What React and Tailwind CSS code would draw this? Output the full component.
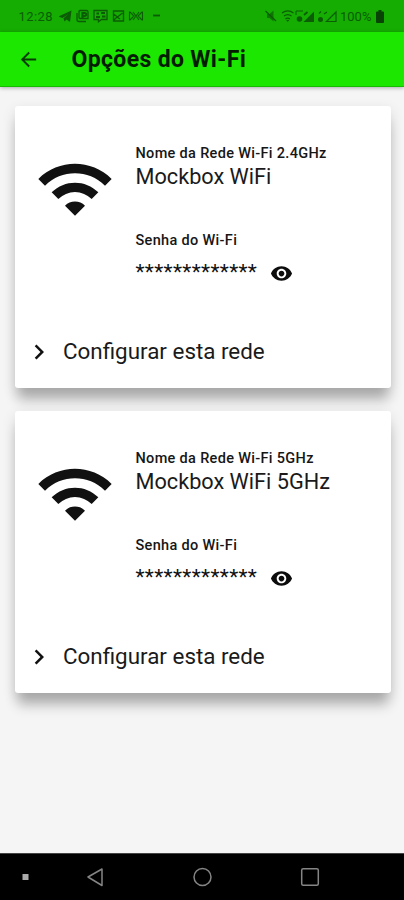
import React from "react";
import { MdArrowBack, MdVisibility, MdWifi, MdKeyboardArrowRight } from "react-icons/md";

const networks = [
  { label: "Nome da Rede Wi-Fi 2.4GHz", name: "Mockbox WiFi", password: "*************" },
  { label: "Nome da Rede Wi-Fi 5GHz", name: "Mockbox WiFi 5GHz", password: "*************" },
];

const NotificationIcons = () => (
  <svg width="106" height="14" viewBox="0 0 106 14" fill="none" stroke="currentColor" strokeWidth="1.3" className="ml-[3px]">
    <path d="M-0.5 7.5 12.5 1.5 11 13 7.5 10.500 5.500 12.5 4.500 9.300 9.500 5 3.500 9Z" fill="currentColor" stroke="none" />
    <path d="M21 1.5h6.5a1.5 1.5 0 0 1 1.5 1.5v6.5h-8a1 1 0 0 1-1-1V2.5a1 1 0 0 1 1-1ZM18 4v6.5a2 2 0 0 0 2 2h7" />
    <path d="M23.5 9V4h2.2a1.5 1.5 0 0 1 0 3h-2" strokeWidth="2.2" />
    <path d="M35 1.5h13v9h-5.5l-3 2.2v-2.2H35Z" />
    <path d="M37.5 4.5h2.5M42 4h4M37 8h4M43 7.5h3.5" strokeWidth="1.9" />
    <path d="M54.5 2h10v10h-10ZM54.5 5l4 3 5-4M55 11l3-3 3 2" />
    <path d="M70.5 2.5v9M83.5 2.5v9M71 3l4 4-4 4M83 3l-4 4 4 4M74 3l6 8M80 3l-6 8" strokeWidth="1.1" />
    <path d="M94 6.5h7" strokeWidth="1.8" />
  </svg>
);

const SignalIcons = () => (
  <svg width="76" height="16" viewBox="0 0 76 16" fill="none" stroke="currentColor" strokeWidth="1.2">
    <path d="M3 6h2.500l4-3.500v11L5.500 10H3Z" fill="currentColor" stroke="none" opacity="0.7" />
    <path d="M1.500 3l10.500 10" />
    <path d="M18 5c3.5-2.6 8-2.6 11.5 0M20 8c2.3-1.7 5.3-1.7 7.5 0M21.500 11c1.3-1 3-1 4.500 0" />
    <path d="M22.2 12h3l-1.500 2Z" fill="currentColor" stroke="none" />
    <path d="M32 3h7M32 3v4" strokeWidth="1" />
    <circle cx="35.5" cy="11" r="2.8" fill="currentColor" stroke="none" />
    <path d="M39.500 14 50 3.500V14Z" fill="currentColor" stroke="none" />
    <path d="M40 7l3.500-3" strokeWidth="1.8" />
    <circle cx="56.500" cy="11.5" r="2.5" fill="currentColor" stroke="none" />
    <path d="M55 5.500l2-2M60 6l3-2M62.5 13.500h9.500v-9.500Z" />
  </svg>
);

const StatusBar = () => (
  <div className="h-8 shrink-0 bg-[#15ad02] text-[#0b5c04] flex items-center pl-[18.5px] pr-5">
    <span className="text-[13px] tracking-[0.4px] pt-0.5 w-[37px]">12:28</span>
    <NotificationIcons />
    <div className="ml-auto flex items-center">
      <SignalIcons />
      <span className="text-[13px] w-[33px] pt-0.5">100%</span>
      <svg width="8" height="13" viewBox="0 0 8 13" fill="currentColor" className="ml-[3px] text-[#084204]">
        <path d="M2.5 0h3v1.5H7a1 1 0 0 1 1 1V12a1 1 0 0 1-1 1H1a1 1 0 0 1-1-1V2.5a1 1 0 0 1 1-1h1.5Z" />
      </svg>
    </div>
  </div>
);

const NetworkCard = ({ network }) => (
  <div className="h-[282px] rounded-[3px] bg-white shadow-[0_15px_12px_-3px_rgba(0,0,0,0.24),0_5px_14px_rgba(0,0,0,0.13)] flex flex-col">
    <div className="flex pt-[39px]">
      <MdWifi className="w-[80px] h-[80px] ml-5 mt-[4px] text-[#111] shrink-0" />
      <div className="ml-[21px] whitespace-nowrap">
        <p className="text-[14.5px] leading-[18px] tracking-[0.32px] font-medium text-[#161616]">{network.label}</p>
        <p className="text-[21.7px] leading-[28px] text-[#1a1a1a]">{network.name}</p>
        <p className="mt-[41px] text-[14.5px] leading-[18px] tracking-[0.32px] font-medium text-[#161616]">Senha do Wi-Fi</p>
        <div className="mt-[11px] flex items-center h-6">
          <span className="w-[134px] text-[21px] leading-6 tracking-[0.32px] -mt-0.5 text-[#111]">{network.password}</span>
          <MdVisibility className="w-[23px] h-[23px] text-[#0c0c0c]" />
        </div>
      </div>
    </div>
    <div className="mt-auto mb-[21px] flex items-center pl-[9.5px]">
      <MdKeyboardArrowRight className="w-[30px] h-[30px] text-[#111]" />
      <span className="ml-[9px] -mt-[2px] text-[22.4px] leading-[30px] text-[#1a1a1a] whitespace-nowrap">Configurar esta rede</span>
    </div>
  </div>
);

const NavigationBar = () => (
  <div className="h-[47px] shrink-0 bg-black border-t border-[#444] text-[#858585]">
    <svg width="404" height="46" viewBox="0 0 404 46" fill="none" stroke="currentColor" strokeWidth="1.5">
      <rect x="22.5" y="20" width="6" height="6" fill="#aaa" stroke="none" />
      <path d="M88 23 102 15v16.5Z" strokeLinejoin="round" />
      <circle cx="202.5" cy="23" r="8.5" />
      <rect x="301.7" y="14.7" width="16.6" height="16.6" rx="1.5" />
    </svg>
  </div>
);

export default function App() {
  return (
    <div className="w-full h-[900px] flex flex-col overflow-hidden bg-[#f5f5f5] font-['Roboto',sans-serif]">
      <StatusBar />
      <header className="h-[55px] shrink-0 bg-[#1ce700] border-b border-[#18bb04] shadow-[0_1px_4px_rgba(0,0,0,0.3)] flex items-center pl-[17px]">
        <MdArrowBack className="w-[23px] h-[23px] text-[#063b02]" />
        <h1 className="ml-[31.5px] mt-[2px] text-[23px] tracking-[0.35px] font-bold text-[#041c02] whitespace-nowrap">Opções do Wi-Fi</h1>
      </header>
      <main className="flex-1 pt-[19px] pl-[14.5px] pr-[13.5px] flex flex-col gap-[23px]">
        {networks.map((network) => (
          <NetworkCard key={network.label} network={network} />
        ))}
      </main>
      <NavigationBar />
    </div>
  );
}
